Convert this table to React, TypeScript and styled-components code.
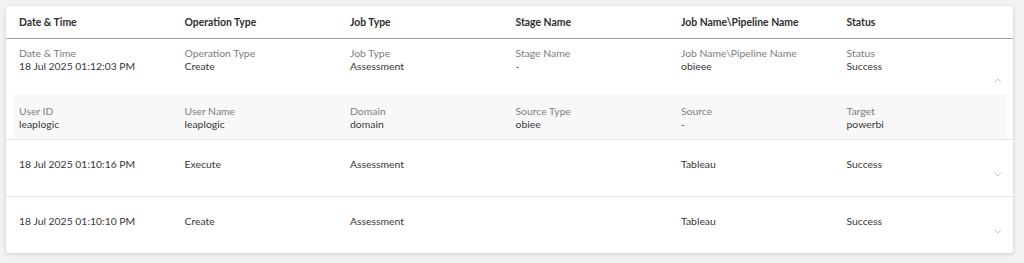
import React from "react";
import styled, { createGlobalStyle } from "styled-components";

const Global = createGlobalStyle`
  html, body { margin: 0; padding: 0; background: #f2f2f5; }
  body { font-family: Lato, "Noto Sans", sans-serif; }
`;

const Page = styled.div`
  padding: 6px 11px 9px 6px;
  height: 263px;
  box-sizing: border-box;
`;

const Card = styled.div`
  background: #fff;
  border-radius: 3px;
  box-shadow: 0 1px 4px rgba(0, 0, 0, 0.16);
  overflow: hidden;
`;

const Grid = styled.div`
  display: grid;
  grid-template-columns: repeat(5, 165.5px) 1fr;
  padding-left: 13px;
`;

const HeaderRow = styled(Grid)`
  height: 33px;
  box-sizing: border-box;
  align-items: center;
  border-bottom: 1px solid #9c9c9c;
`;

const HeadCell = styled.div`
  font-size: 10.4px;
  font-weight: 700;
  color: #2e2e2e;
`;

const Row = styled.div<{ $last?: boolean }>`
  border-bottom: ${(p) => (p.$last ? "none" : "1px solid #e8e8e8")};
`;

const Main = styled(Grid)<{ $h: number; $pad: number }>`
  height: ${(p) => p.$h}px;
  box-sizing: border-box;
  padding-top: ${(p) => p.$pad}px;
`;

const Cell = styled.div`
  display: flex;
  flex-direction: column;
`;

const LastCell = styled.div`
  display: flex;
  justify-content: space-between;
  align-items: flex-start;
  padding-right: 11px;
`;

const Label = styled.div`
  font-size: 10.4px;
  color: #7d7d7d;
  line-height: 13px;
`;

const Value = styled.div`
  font-size: 10.4px;
  color: #383838;
  line-height: 13px;
`;

const Chevron = styled.svg<{ $top: number }>`
  margin-top: ${(p) => p.$top}px;
  flex: none;
`;

const Detail = styled(Grid)`
  background: #f8f8f8;
  margin: 0 6px 0 8px;
  padding: 11px 0 0 5px;
  height: 45px;
  box-sizing: border-box;
`;

const Up = ({ top }: { top: number }) => (
  <Chevron $top={top} width="8" height="5" viewBox="0 0 8 5" fill="none">
    <path d="M0.5 4.5L4 1L7.5 4.5" stroke="#c2c2c2" strokeWidth="0.9" />
  </Chevron>
);
const Down = ({ top }: { top: number }) => (
  <Chevron $top={top} width="8" height="5" viewBox="0 0 8 5" fill="none">
    <path d="M0.5 0.5L4 4L7.5 0.5" stroke="#c2c2c2" strokeWidth="0.9" />
  </Chevron>
);

const headers = ["Date & Time", "Operation Type", "Job Type", "Stage Name", "Job Name\\Pipeline Name", "Status"];

type Pair = [string, string];

const expanded: Pair[] = [
  ["Date & Time", "18 Jul 2025 01:12:03 PM"],
  ["Operation Type", "Create"],
  ["Job Type", "Assessment"],
  ["Stage Name", "-"],
  ["Job Name\\Pipeline Name", "obieee"],
  ["Status", "Success"],
];

const details: Pair[] = [
  ["User ID", "leaplogic"],
  ["User Name", "leaplogic"],
  ["Domain", "domain"],
  ["Source Type", "obiee"],
  ["Source", "-"],
  ["Target", "powerbi"],
];

const rows: string[][] = [
  ["18 Jul 2025 01:10:16 PM", "Execute", "Assessment", "", "Tableau", "Success"],
  ["18 Jul 2025 01:10:10 PM", "Create", "Assessment", "", "Tableau", "Success"],
];

export default function App() {
  return (
    <Page>
      <Global />
      <Card>
        <HeaderRow>
          {headers.map((h) => (
            <HeadCell key={h}>{h}</HeadCell>
          ))}
        </HeaderRow>
        <Row>
          <Main $h={55} $pad={8}>
            {expanded.slice(0, 5).map(([l, v]) => (
              <Cell key={l}>
                <Label>{l}</Label>
                <Value>{v}</Value>
              </Cell>
            ))}
            <LastCell>
              <Cell>
                <Label>{expanded[5][0]}</Label>
                <Value>{expanded[5][1]}</Value>
              </Cell>
              <Up top={31} />
            </LastCell>
          </Main>
          <Detail>
            {details.map(([l, v]) => (
              <Cell key={l}>
                <Label>{l}</Label>
                <Value>{v}</Value>
              </Cell>
            ))}
          </Detail>
        </Row>
        {rows.map((r, i) => (
          <Row key={i} $last={i === rows.length - 1}>
            <Main $h={56} $pad={18}>
              {r.slice(0, 5).map((v, j) => (
                <Cell key={j}>
                  <Value>{v}</Value>
                </Cell>
              ))}
              <LastCell>
                <Cell>
                  <Value>{r[5]}</Value>
                </Cell>
                <Down top={14} />
              </LastCell>
            </Main>
          </Row>
        ))}
      </Card>
    </Page>
  );
}
